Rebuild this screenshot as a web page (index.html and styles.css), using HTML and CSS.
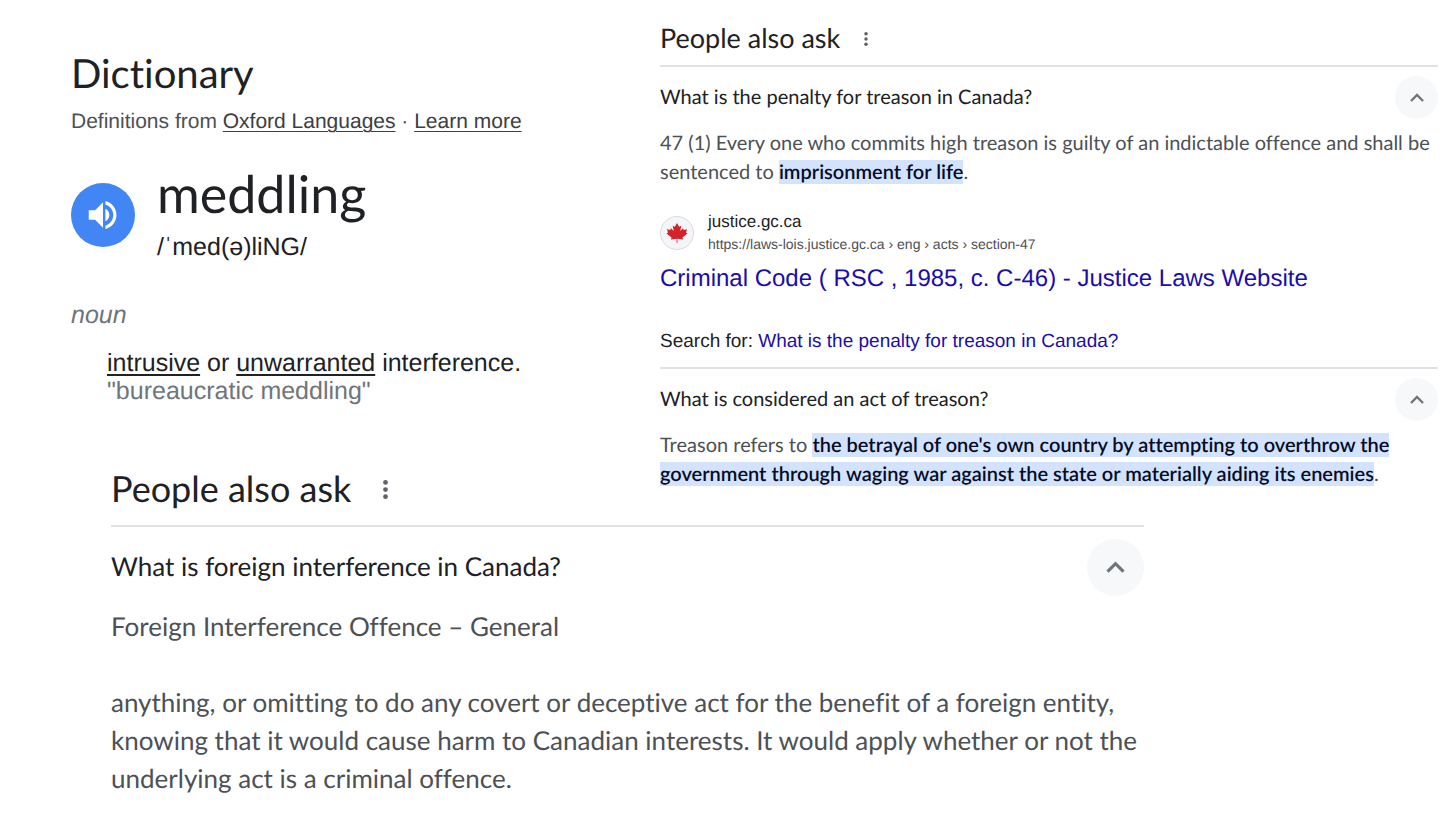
FILE: index.html
```
<!DOCTYPE html>
<html lang="en">
<head>
  <meta charset="UTF-8" />
  <meta name="viewport" content="width=device-width, initial-scale=1.0"/>
  <title>meddling - Search</title>
  <link rel="stylesheet" href="styles.css">
</head>
<body>
  <main class="results">
    <section class="dictionary">
      <h1>Dictionary</h1>
      <p class="source">Definitions from <a href="#">Oxford Languages</a> · <a href="#">Learn more</a></p>
      <div class="word-row">
        <button class="speaker" aria-label="Listen">
          <svg viewBox="0 0 24 24" width="38" height="38" fill="#fff"><path d="M3 9v6h4l5 5V4L7 9H3zm10.500-1v8c1.500-.75 2.500-2.250 2.500-4s-1-3.250-2.500-4zM13.500 3.200v2.100c3 .9 5 3.600 5 6.700s-2 5.800-5 6.700v2.100c4-.9 7-4.500 7-8.800s-3-7.900-7-8.800z"/></svg>
        </button>
        <div>
          <h2 class="word">meddling</h2>
          <p class="phonetic">/ˈmed(ə)liNG/</p>
        </div>
      </div>
      <p class="part">noun</p>
      <div class="meaning">
        <p><a href="#">intrusive</a> or <a href="#">unwarranted</a> interference.</p>
        <p class="example">"bureaucratic meddling"</p>
      </div>
    </section>

    <section class="ask ask-side">
      <header class="ask-header">
        <h2>People also ask</h2>
        <button class="more" aria-label="About this result">
          <svg viewBox="0 0 4 16" width="4" height="14" fill="#5f6368"><circle cx="2" cy="2" r="2"/><circle cx="2" cy="8" r="2"/><circle cx="2" cy="14" r="2"/></svg>
        </button>
      </header>
      <article>
        <div class="question">
          <h3>What is the penalty for treason in Canada?</h3>
          <button class="toggle" aria-label="Collapse">
            <svg viewBox="0 0 14 9" width="14" height="9" fill="none" stroke="#70757a" stroke-width="2.400"><path d="M1 8l6-6 6 6"/></svg>
          </button>
        </div>
        <p class="answer">47 (1) Every one who commits high treason is guilty of an indictable offence and shall be<br>sentenced to <mark>imprisonment for life</mark>.</p>
        <div class="site">
          <span class="favicon">
            <svg viewBox="0 0 24 24" width="22" height="22" fill="#d3222a"><path d="M12 1l2.300 4.200 2.300-1.200-1 5.800 3-3 .7 1.800 3.700-.6-1.200 3.500 1.700 1-5.600 4.500.7 2-6.300-.8.2 4.800h-1l.2-4.800-6.300.8.700-2L.5 12.500l1.700-1L1 8l3.700.6.7-1.800 3 3-1-5.800 2.300 1.200z"/></svg>
          </span>
          <div>
            <p class="site-name">justice.gc.ca</p>
            <p class="site-url">https://laws-lois.justice.gc.ca › eng › acts › section-47</p>
          </div>
        </div>
        <a class="result-link" href="#">Criminal Code ( RSC , 1985, c. C-46) - Justice Laws Website</a>
        <p class="search-for">Search for: <a href="#">What is the penalty for treason in Canada?</a></p>
      </article>
      <article>
        <div class="question">
          <h3>What is considered an act of treason?</h3>
          <button class="toggle" aria-label="Collapse">
            <svg viewBox="0 0 14 9" width="14" height="9" fill="none" stroke="#70757a" stroke-width="2.400"><path d="M1 8l6-6 6 6"/></svg>
          </button>
        </div>
        <p class="answer">Treason refers to <mark>the betrayal of one's own country by attempting to overthrow the<br>government through waging war against the state or materially aiding its enemies</mark>.</p>
      </article>
    </section>

    <section class="ask ask-large">
      <header class="ask-header">
        <h2>People also ask</h2>
        <button class="more" aria-label="About this result">
          <svg viewBox="0 0 4 16" width="5" height="19" fill="#5f6368"><circle cx="2" cy="2" r="2"/><circle cx="2" cy="8" r="2"/><circle cx="2" cy="14" r="2"/></svg>
        </button>
      </header>
      <article>
        <div class="question">
          <h3>What is foreign interference in Canada?</h3>
          <button class="toggle" aria-label="Collapse">
            <svg viewBox="0 0 14 9" width="19" height="12" fill="none" stroke="#70757a" stroke-width="2.400"><path d="M1 8l6-6 6 6"/></svg>
          </button>
        </div>
        <p class="answer">Foreign Interference Offence – General</p>
        <p class="answer">anything, or omitting to do any covert or deceptive act for the benefit of a foreign entity,<br>knowing that it would cause harm to Canadian interests. It would apply whether or not the<br>underlying act is a criminal offence.</p>
      </article>
    </section>
  </main>
</body>
</html>
```
FILE: styles.css
```
* { box-sizing: border-box; }
body {
  margin: 0;
  background-color: #fff;
  color: #202124;
  font-family: "Liberation Sans", Arial, sans-serif;
  text-rendering: geometricPrecision;
}
h1, h2, h3, p {
  margin: 0;
  font-weight: 400;
}
h1, h2, h3, .answer {
  font-family: Lato, sans-serif;
  font-variant-ligatures: none;
}
button {
  padding: 0;
  border: none;
  background: none;
  cursor: pointer;
  display: flex;
  align-items: center;
  justify-content: center;
}
.results {
  display: grid;
  grid-template-columns: 589fr 778fr;
  padding: 0 18px 20px 71px;
}

/* Dictionary */
.dictionary {
  padding-top: 49px;
}
.dictionary a {
  color: inherit;
  text-decoration-thickness: 2px;
  text-underline-offset: 3px;
}
h1 {
  font-size: 40px;
  line-height: 48px;
}
.source {
  margin-top: 10px;
  font-size: 21px;
  line-height: 30px;
  color: #4d5156;
}
.dictionary .source a {
  color: #3c4043;
  text-decoration-thickness: 1px;
}
.word-row {
  display: flex;
  align-items: center;
  gap: 22px;
  margin-top: 25px;
}
.speaker {
  width: 64px;
  height: 64px;
  border-radius: 50%;
  background-color: #4285f4;
}
.word {
  font-size: 52px;
  line-height: 64px;
}
.phonetic {
  font-size: 25px;
  line-height: 42px;
}
.part {
  margin-top: 32px;
  font-size: 25px;
  line-height: 30px;
  font-style: italic;
  color: #70757a;
}
.meaning {
  margin: 19px 0 0 36px;
  font-size: 25px;
  line-height: 28px;
}
.example {
  color: #70757a;
}

/* People also ask */
.ask-header {
  display: flex;
  align-items: center;
}
.ask-header h2 {
  padding-bottom: 2px;
}
.question {
  display: flex;
  align-items: center;
  justify-content: space-between;
  border-top: 2px solid #dfe1e5;
}
.toggle {
  border-radius: 50%;
  background-color: #f7f8fa;
}
.answer {
  color: #4d5156;
}
mark {
  background-color: #d3e3fd;
  color: #040c28;
  font-weight: 600;
}
.ask-side {
  grid-column: 2;
  grid-row: 1 / 3;
  padding-top: 12px;
  font-size: 20px;
}
.ask-side .ask-header {
  gap: 24px;
  height: 53px;
}
.ask-side h2 {
  font-size: 27px;
}
.ask-side h3 {
  font-size: 20px;
}
.ask-side .question {
  height: 62px;
}
.ask-side .toggle {
  width: 43px;
  height: 43px;
}
.ask-side .answer {
  margin-top: 2px;
  line-height: 29px;
}
.site {
  display: flex;
  align-items: center;
  gap: 14px;
  margin-top: 24px;
}
.favicon {
  display: flex;
  align-items: center;
  justify-content: center;
  width: 34px;
  height: 34px;
  border: 1px solid #dadce0;
  border-radius: 50%;
  background-color: #f3f5f8;
}
.site-name {
  font-size: 17px;
  line-height: 22px;
}
.site-url {
  font-size: 14px;
  line-height: 22px;
  color: #4d5156;
}
.ask a {
  color: #1a0dab;
  text-decoration: none;
}
.result-link {
  display: block;
  margin-top: 9px;
  font-size: 24px;
  line-height: 30px;
}
.search-for {
  margin: 34px 0 11px;
  font-size: 19px;
  line-height: 28px;
}
.ask-large {
  grid-column: 1 / 3;
  grid-row: 2;
  margin: 48px 294px 0 40px;
  font-size: 26px;
}
.ask-large .ask-header {
  gap: 32px;
  height: 72px;
}
.ask-large h2 {
  font-size: 36px;
}
.ask-large h3 {
  padding-bottom: 2px;
  font-size: 26px;
}
.ask-large .question {
  height: 82px;
}
.ask-large .toggle {
  width: 57px;
  height: 57px;
}
.ask-large .answer {
  line-height: 38px;
}
.answer + .answer {
  margin-top: 38px;
}
```
